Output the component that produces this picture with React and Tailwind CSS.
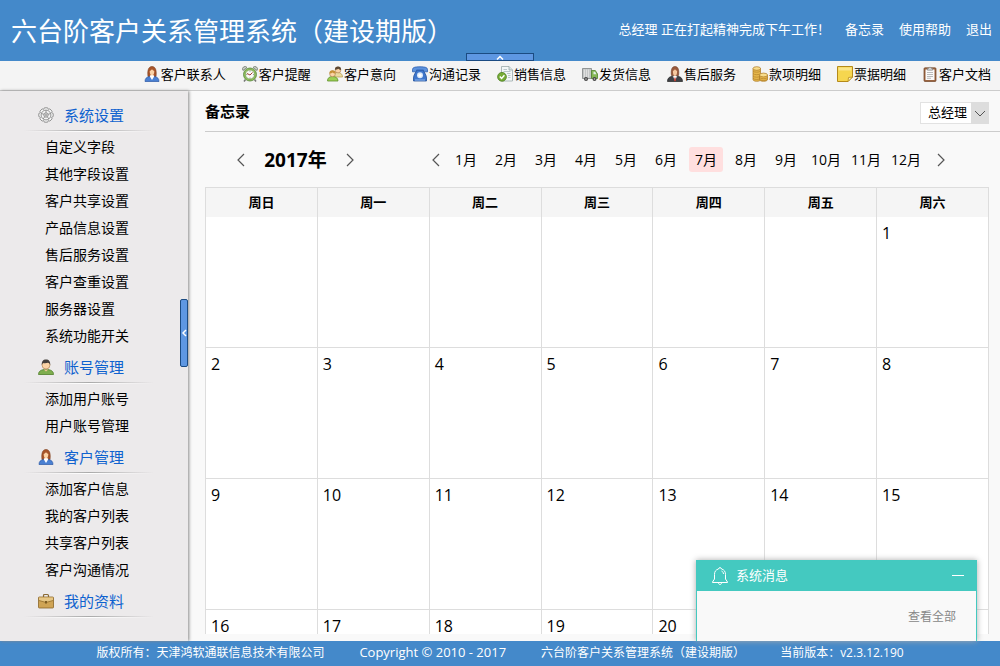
import { useState } from 'react';
import clsx from 'clsx';

const Icon = ({ children }) => (
  <svg viewBox="0 0 16 16" className="h-4 w-4 shrink-0" aria-hidden="true">
    {children}
  </svg>
);

const ContactIcon = () => (
  <Icon>
    <path d="M4 10.5C3.4 6 3.8 .5 8 .5s4.6 5.5 4 10l-2 .5H6z" fill="#a8552a" stroke="#7c3a17" strokeWidth=".6" />
    <path d="M1 15.500c0-3.200 2-4.800 4.800-5L8 12l2.200-1.500c2.800.2 4.800 1.800 4.800 5z" fill="#4a80d2" stroke="#2a57a5" strokeWidth=".7" />
    <path d="M5.800 10.500 6.500 9h3l.7 1.500L8 14z" fill="#fff" />
    <path d="M5.700 5c.8-.3 1.800-1 2.300-1.800.5.8 1.300 1.500 2.300 1.800 0 2.600-.8 4.500-2.300 4.500S5.700 7.600 5.700 5z" fill="#fbd3a6" />
  </Icon>
);

const ServiceIcon = () => (
  <Icon>
    <path d="M4.500 9.500C3.800 5.500 4.200.5 8 .5s4.200 5 3.500 9z" fill="#9a5a3c" stroke="#6d3a22" strokeWidth=".6" />
    <path d="M.500 15.500c0-3.500 2-5 5.300-5.300L8 12l2.200-1.800c3.300.3 5.300 1.800 5.300 5.300z" fill="#3f4247" stroke="#222" strokeWidth=".7" />
    <path d="M6 10.200h4L8 15z" fill="#fff" />
    <path d="M7.500 11.500h1l.5 3-1 1-1-1z" fill="#c23b2e" />
    <path d="M5.900 5c.8-.3 1.600-1 2.100-1.800.5.8 1.300 1.500 2.100 1.800 0 2.800-.6 5-2.100 5s-2.100-2.200-2.100-5z" fill="#f6c9a0" />
  </Icon>
);

const AlarmIcon = () => (
  <Icon>
    <path d="M1 4.500a2.500 2.500 0 0 1 4-3zM15 4.500a2.500 2.500 0 0 0-4-3z" fill="#c9cdc6" stroke="#6f776b" strokeWidth=".8" />
    <path d="M3.500 13.500 2 15.500M12.500 13.500l1.500 2" stroke="#777" strokeWidth="1.500" />
    <circle cx="8" cy="8.500" r="6.500" fill="#8fbd5b" stroke="#57853a" strokeWidth=".8" />
    <circle cx="8" cy="8.500" r="4.500" fill="#f8faf5" stroke="#6b9449" strokeWidth=".6" />
    <path d="M5 7.500 8 9l2.500-2.500" fill="none" stroke="#a23c35" />
    <path d="M8 4.800v.8M8 11.600v.8M4.300 8.500h.8M11 8.500h.8" stroke="#555" strokeWidth=".7" />
  </Icon>
);

const IntentIcon = () => (
  <Icon>
    <path d="M6 9.500c0-2 1.500-3 4.500-3s5 1.500 5 4.500H6z" fill="#e9d9a0" stroke="#b49a4b" strokeWidth=".7" />
    <circle cx="11" cy="4" r="2.900" fill="#fbd3a6" stroke="#9a6b37" strokeWidth=".5" />
    <path d="M8 3.800C7.800 1.500 9 .5 11 .5s3.300 1 3 3.500c-1.500-.2-2.200-.8-2.800-1.200C10.500 3.500 9 3.800 8 3.800z" fill="#5b4632" />
    <path d="M.500 15c0-3 1.800-4.500 5-4.500s5.500 1.500 5.500 4.500z" fill="#9ccf55" stroke="#5f9129" strokeWidth=".8" />
    <circle cx="5.500" cy="7.800" r="2.900" fill="#fbd3a6" stroke="#9a6b37" strokeWidth=".5" />
    <path d="M2.500 7.500c-.2-2.200 1-3.200 3-3.200s3.300 1 3 3.200c-1.500 0-2.500-.5-3-1-.6.600-1.800 1-3 1z" fill="#c69138" />
  </Icon>
);

const PhoneIcon = () => (
  <Icon>
    <path d="M4.300 4h7.400c.3 3 2.800 4.500 2.800 8v3h-13v-3c0-3.500 2.500-5 2.800-8z" fill="#3f77cc" stroke="#23509a" strokeWidth=".8" />
    <path d="M.500 5.800V3.500C.5 1.500 3 .8 8 .8s7.500.7 7.500 2.700v2.300h-4V4h-7v1.800z" fill="#5d92dd" stroke="#2d5fae" strokeWidth=".8" />
    <circle cx="8" cy="9.300" r="3" fill="#dbe9fa" />
    <circle cx="8" cy="9.300" r="1.600" fill="#fff" />
    <path d="M3 14h10" stroke="#8db5ec" />
  </Icon>
);

const SalesIcon = () => (
  <Icon>
    <path d="M4.500.5H12L15.500 4v11h-11z" fill="#f3f7f7" stroke="#9aa9a9" strokeWidth=".8" />
    <path d="M12 .5V4h3.500" fill="#d9e3e3" stroke="#9aa9a9" strokeWidth=".8" />
    <path d="M6.500 3.500H10M6.500 5.500h7M10 7.500h3.500M11 9.500h2.500M11 11.500h2.500" stroke="#a9b9bc" strokeWidth=".8" />
    <circle cx="5" cy="10.800" r="4.400" fill="#77ac36" stroke="#4d8020" strokeWidth=".8" />
    <path d="m2.800 10.500 1.800 2 2.800-3.300" fill="none" stroke="#fff" strokeWidth="1.400" />
  </Icon>
);

const TruckIcon = () => (
  <Icon>
    <path d="M.500 2.500h9v10h-9z" fill="#c3c6c6" stroke="#7f8383" strokeWidth=".8" />
    <path d="M2.500 3.500v8M4.500 3.500v8M6.500 3.500v8" stroke="#e6e6e6" strokeWidth=".8" />
    <path d="M9.500 4.500h3.800l2.200 3.500v4.500h-6z" fill="#86b856" stroke="#52822f" strokeWidth=".8" />
    <path d="M11.500 5.700h1.600l1.300 2.500h-2.900z" fill="#e2efe9" />
    <circle cx="4" cy="13" r="2" fill="#444" />
    <circle cx="12.500" cy="13" r="2" fill="#444" />
    <circle cx="4" cy="13" r=".8" fill="#ccc" />
    <circle cx="12.500" cy="13" r=".8" fill="#ccc" />
  </Icon>
);

const CoinsIcon = () => (
  <Icon>
    <path d="M1 2.500v11c0 1 1.500 1.800 3.800 1.800s3.700-.8 3.700-1.800v-11z" fill="#e6b64b" stroke="#a97722" strokeWidth=".7" />
    <ellipse cx="4.750" cy="2.500" rx="3.750" ry="1.800" fill="#f8dc8b" stroke="#a97722" strokeWidth=".7" />
    <path d="M1 5c1 1.600 6.500 1.600 7.500 0M1 7.500c1 1.600 6.500 1.600 7.500 0M1 10c1 1.600 6.500 1.600 7.500 0M1 12.300c1 1.600 6.500 1.600 7.500 0" fill="none" stroke="#b5832a" strokeWidth=".7" />
    <path d="M7.500 9v4.500c0 1 1.700 1.800 4 1.800s4-.8 4-1.800V9z" fill="#e6b64b" stroke="#a97722" strokeWidth=".7" />
    <ellipse cx="11.500" cy="9" rx="4" ry="1.900" fill="#f8dc8b" stroke="#a97722" strokeWidth=".7" />
    <path d="M7.500 11.500c1 1.600 7 1.600 8 0M7.500 13.300c1 1.600 7 1.600 8 0" fill="none" stroke="#b5832a" strokeWidth=".7" />
  </Icon>
);

const NoteIcon = () => (
  <Icon>
    <path d="M.500.5h15V11L11 15.500H.5z" fill="#f6d64f" stroke="#b58a1a" />
    <path d="M1.500 1.500h13v3h-13z" fill="#fae58a" />
    <path d="M15.500 11 11 15.500l.5-4z" fill="#fdf3bf" stroke="#b58a1a" strokeWidth=".8" />
  </Icon>
);

const ClipboardIcon = () => (
  <Icon>
    <rect x="2" y="1.800" width="12" height="13.700" rx="1" fill="#9a6440" stroke="#714426" strokeWidth=".7" />
    <path d="M3.500 3.500h9v10.500h-9z" fill="#fafafa" />
    <path d="M5 6.500h6M5 8.500h6M5 10.500h6M5 12.300h4" stroke="#aaa" strokeWidth=".8" />
    <path d="M5.500 4.200V2.300h1.300C7 .8 9 .8 9.200 2.300h1.300v1.900z" fill="#d5d5d5" stroke="#777" strokeWidth=".6" />
  </Icon>
);

const GearIcon = () => (
  <Icon>
    <g fill="none" stroke="#8a8a8a" strokeWidth=".9">
      <path d="M6.400.8h3.200l.7 1.500 1.600-.4 2.200 2.300-.5 1.500 1.600.8v3l-1.600.8.5 1.600-2.200 2.200-1.600-.5-.7 1.600H6.400l-.7-1.600-1.600.5-2.200-2.200.5-1.600L.800 9.500v-3l1.600-.8-.5-1.500 2.200-2.300 1.600.4z" fill="#f4f4f4" />
      <circle cx="8" cy="8" r="4.900" />
      <circle cx="8" cy="8" r="2.200" fill="#ddd" />
      <path d="M8 3.100v2.700M3.300 6.500l2.600.8M12.700 6.500l-2.600.8M5.100 12l1.600-2.200M10.900 12 9.300 9.800" />
    </g>
    <circle cx="8" cy="8" r=".8" fill="#777" />
  </Icon>
);

const AccountIcon = () => (
  <Icon>
    <path d="M.500 15.500c0-3.300 2.500-5 7.500-5s7.500 1.700 7.500 5z" fill="#7fae4e" stroke="#4f7d2a" strokeWidth=".8" />
    <path d="M5.800 10.600 8 12.500l2.200-1.900" fill="#f1c797" />
    <circle cx="8" cy="6" r="4" fill="#fbd3a6" stroke="#a77948" strokeWidth=".6" />
    <path d="M3.800 6C3.500 2.500 5 .5 8 .5s4.500 2 4.200 5.500C11.500 4.500 11 4 10 3.800 8.500 4.300 6 4.300 5 4z" fill="#45403c" />
  </Icon>
);

const BriefcaseIcon = () => (
  <Icon>
    <path d="M5.500 4V2.500c0-.7.300-1 1-1h3c.7 0 1 .3 1 1V4" fill="none" stroke="#8a6a35" strokeWidth="1.200" />
    <rect x=".500" y="4" width="15" height="11" rx=".8" fill="#cfa455" stroke="#8a6427" strokeWidth=".8" />
    <path d="M1 4.500h14v3L9 9H7L1 7.500z" fill="#e6c685" />
    <path d="M1 7.500 7 9.200h2l6-1.700" fill="none" stroke="#94702f" strokeWidth=".8" />
    <rect x="7" y="8" width="2" height="2.500" fill="#7d5c22" />
  </Icon>
);

const Chevron = ({ dir }) => (
  <svg viewBox="0 0 8 14" className="h-3.5 w-2" aria-hidden="true">
    <path d={dir === 'left' ? 'M7 1 1 7l6 6' : 'M1 1l6 6-6 6'} fill="none" stroke="#555" strokeWidth="1.200" />
  </svg>
);

const TOOLBAR = [
  { name: '客户联系人', icon: ContactIcon },
  { name: '客户提醒', icon: AlarmIcon },
  { name: '客户意向', icon: IntentIcon },
  { name: '沟通记录', icon: PhoneIcon },
  { name: '销售信息', icon: SalesIcon },
  { name: '发货信息', icon: TruckIcon },
  { name: '售后服务', icon: ServiceIcon },
  { name: '款项明细', icon: CoinsIcon },
  { name: '票据明细', icon: NoteIcon },
  { name: '客户文档', icon: ClipboardIcon },
];

const MENU = [
  {
    name: '系统设置',
    icon: GearIcon,
    items: ['自定义字段', '其他字段设置', '客户共享设置', '产品信息设置', '售后服务设置', '客户查重设置', '服务器设置', '系统功能开关'],
  },
  { name: '账号管理', icon: AccountIcon, items: ['添加用户账号', '用户账号管理'] },
  { name: '客户管理', icon: ContactIcon, items: ['添加客户信息', '我的客户列表', '共享客户列表', '客户沟通情况'] },
  { name: '我的资料', icon: BriefcaseIcon, items: [] },
];

const WEEKDAYS = ['周日', '周一', '周二', '周三', '周四', '周五', '周六'];
const MONTHS = [1, 2, 3, 4, 5, 6, 7, 8, 9, 10, 11, 12];

function buildWeeks(year, month) {
  const offset = new Date(year, month - 1, 1).getDay();
  const days = new Date(year, month, 0).getDate();
  const weeks = [];
  for (let start = 1 - offset; start <= days; start += 7) {
    weeks.push(WEEKDAYS.map((_, i) => (start + i > 0 && start + i <= days ? start + i : null)));
  }
  return weeks;
}

function Header() {
  return (
    <header className="relative flex h-[61px] shrink-0 items-center justify-between bg-[#4489ca] pl-[11px] pr-2 text-white">
      <h1 className="whitespace-nowrap text-[26px] leading-8">六台阶客户关系管理系统（建设期版）</h1>
      <div className="flex gap-[15px] whitespace-nowrap pb-1 text-[13px] leading-5">
        <span>总经理 正在打起精神完成下午工作！</span>
        <a href="#memo">备忘录</a>
        <a href="#help">使用帮助</a>
        <a href="#logout">退出</a>
      </div>
      <button
        aria-label="收起顶部"
        className="absolute bottom-0 left-1/2 flex h-2 w-[68px] -translate-x-1/2 items-center justify-center border border-[#1b4b82] bg-[#5e97e2]"
      >
        <svg viewBox="0 0 8 5" className="h-[5px] w-2" aria-hidden="true">
          <path d="M1 4.500l3-3 3 3" fill="none" stroke="#fff" strokeWidth="1.500" />
        </svg>
      </button>
    </header>
  );
}

function Toolbar() {
  return (
    <nav className="flex h-[30px] shrink-0 items-center justify-end gap-4 border-b border-[#ccc] bg-[#f4f4f4] pb-[3px] pr-[9px] text-[13px] leading-5">
      {TOOLBAR.map((item) => (
        <a key={item.name} href="#" className="flex items-center gap-px whitespace-nowrap">
          <item.icon />
          {item.name}
        </a>
      ))}
    </nav>
  );
}

function Sidebar() {
  return (
    <aside className="relative z-10 w-[188px] shrink-0 bg-[#eceaeb] pt-[7px] shadow-[1px_0_3px_#888]">
      {MENU.map((group) => (
        <section key={group.name}>
          <h2 className="flex h-8 items-center gap-2.5 pl-[38px] pt-0.5 text-[15px] text-[#0f62cf]">
            <group.icon />
            {group.name}
          </h2>
          <div className="ml-6 h-px w-[130px] bg-linear-to-r from-transparent via-[#aaa] to-transparent" />
          <div className="mb-px ml-6 h-px w-[130px] bg-linear-to-r from-transparent via-white to-transparent" />
          <ul className="pb-px pl-[45px] text-sm leading-[27px]">
            {group.items.map((name) => (
              <li key={name}>
                <a href="#">{name}</a>
              </li>
            ))}
          </ul>
        </section>
      ))}
      <button
        aria-label="收起菜单"
        className="absolute right-0 top-[208px] flex h-[68px] w-2 items-center justify-center rounded-xs border border-[#1b4b82] bg-[#5e97e2]"
      >
        <svg viewBox="0 0 5 8" className="h-2 w-[5px]" aria-hidden="true">
          <path d="M4 1 1 4l3 3" fill="none" stroke="#fff" strokeWidth="1.500" />
        </svg>
      </button>
    </aside>
  );
}

function Calendar() {
  const [year, setYear] = useState(2017);
  const [month, setMonth] = useState(7);

  return (
    <div className="pr-[11px]">
      <div className="flex h-[55px] items-center pl-8">
        <div className="flex w-[195px] items-center">
          <button aria-label="上一年" onClick={() => setYear(year - 1)}>
            <Chevron dir="left" />
          </button>
          <strong className="w-[101px] text-center text-[19px] leading-6">{year}年</strong>
          <button aria-label="下一年" onClick={() => setYear(year + 1)}>
            <Chevron dir="right" />
          </button>
        </div>
        <button aria-label="上个月" onClick={() => setMonth(Math.max(1, month - 1))}>
          <Chevron dir="left" />
        </button>
        <div className="ml-[9px] mr-3.5 flex gap-1.5">
          {MONTHS.map((m) => (
            <button
              key={m}
              onClick={() => setMonth(m)}
              className={clsx('h-[25px] w-[34px] whitespace-nowrap rounded-[3px] text-sm', m === month && 'bg-[#ffdfdf]')}
            >
              {m}月
            </button>
          ))}
        </div>
        <button aria-label="下个月" onClick={() => setMonth(Math.min(12, month + 1))}>
          <Chevron dir="right" />
        </button>
      </div>

      <table className="w-full table-fixed border-collapse border border-[#ddd]">
        <thead>
          <tr>
            {WEEKDAYS.map((day) => (
              <th key={day} className="h-[29px] border-x border-[#ddd] bg-[#f5f5f5] text-[13px] leading-5">
                {day}
              </th>
            ))}
          </tr>
        </thead>
        <tbody>
          {buildWeeks(year, month).map((week, i) => (
            <tr key={i}>
              {week.map((day, j) => (
                <td key={j} className="h-[131px] border-x border-b border-[#ddd] bg-white px-[5px] pt-1 align-top leading-6">
                  {day}
                </td>
              ))}
            </tr>
          ))}
        </tbody>
      </table>
    </div>
  );
}

function Messages() {
  return (
    <section className="absolute bottom-0 right-[23px] z-20 h-[81px] w-[281px] border-x border-[#44c9c0] bg-[#f9f9f9] shadow-[0_0_6px_#aaa]">
      <div className="flex h-[31px] items-center bg-[#44c9c0] pl-[15px] pr-3 text-[13px] text-white">
        <svg viewBox="0 0 16 18" className="mr-2 h-[18px] w-4" fill="none" stroke="#fff" aria-hidden="true">
          <path d="M6.500 2C6.500.2 9.500.2 9.500 2c2.700.7 4 2.500 4 5.500v4.500l2 3v.500H.5V15l2-3V7.500c0-3 1.300-4.800 4-5.500z" />
          <path d="M6.500 16c.2 2 2.800 2 3 0M9.500 4c1.300.5 1.800 1.500 2 3" />
        </svg>
        <h2>系统消息</h2>
        <button aria-label="最小化" className="ml-auto h-3 w-3">
          <span className="block h-px bg-white" />
        </button>
      </div>
      <a href="#" className="mr-5 mt-4 block text-right text-xs leading-5 text-[#888]">
        查看全部
      </a>
    </section>
  );
}

export default function App() {
  return (
    <div lang="zh-CN" className="flex h-screen flex-col overflow-hidden bg-[#f9f9f9] font-['Open_Sans','Noto_Sans_CJK_SC',sans-serif] text-black">
      <Header />
      <Toolbar />
      <div className="relative flex min-h-0 flex-1">
        <Sidebar />
        <main className="flex min-w-0 flex-1 flex-col pb-[7px] pl-[17px]">
          <div className="flex h-[41px] shrink-0 items-center justify-between border-b border-[#ccc] pr-[11px]">
            <h2 className="text-[15px] font-bold">备忘录</h2>
            <div className="relative mt-1 h-[22px] w-[69px]">
              <select
                aria-label="成员"
                className="block h-full w-full appearance-none border border-[#e2e2e2] bg-white pb-0.5 pl-[7px] text-[13px] leading-[18px]"
              >
                <option>总经理</option>
              </select>
              <span className="pointer-events-none absolute inset-y-0 right-0 flex w-[18px] items-center justify-center bg-[#ddd]">
                <svg viewBox="0 0 12 7" className="h-[7px] w-3" aria-hidden="true">
                  <path d="M1 1l5 5 5-5" fill="none" stroke="#555" />
                </svg>
              </span>
            </div>
          </div>
          <div className="min-h-0 flex-1 overflow-y-auto [scrollbar-width:none]">
            <Calendar />
          </div>
        </main>
        <Messages />
      </div>
      <footer className="flex h-[25px] shrink-0 items-center justify-center gap-[35px] whitespace-nowrap bg-[#4489ca] pb-0.5 text-xs text-white">
        <span>版权所有：天津鸿软通联信息技术有限公司</span>
        <span className="text-[13px]">Copyright © 2010 - 2017</span>
        <span>六台阶客户关系管理系统（建设期版）</span>
        <span>当前版本：v2.3.12.190</span>
      </footer>
    </div>
  );
}
